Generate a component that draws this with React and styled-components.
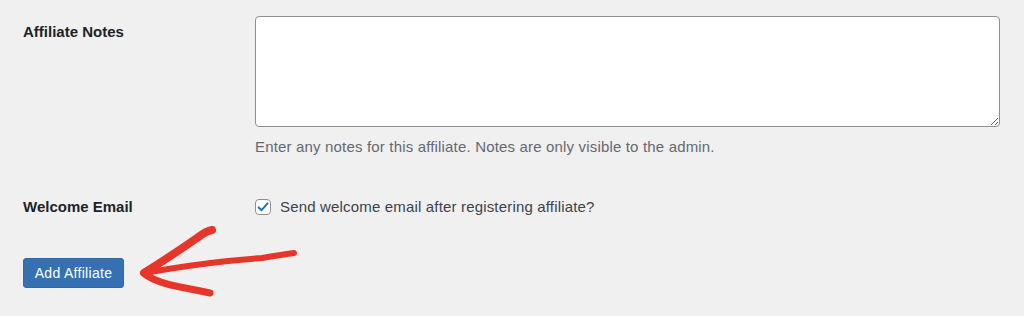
import styled, { createGlobalStyle } from "styled-components";

const GlobalStyle = createGlobalStyle`
  body {
    margin: 0;
    background: #f0f0f1;
    font-family: "Liberation Sans", Arial, sans-serif;
    color: #1d2327;
  }
`;

const Page = styled.div`
  position: relative;
  width: 1024px;
  height: 316px;
  padding: 16px 24px 0 23px;
  box-sizing: border-box;
`;

const Row = styled.div`
  display: grid;
  grid-template-columns: 232px 1fr;
  align-items: ${(p) => (p.$center ? "center" : "start")};
  margin-bottom: ${(p) => p.$gap || 0}px;
`;

const Label = styled.div`
  font-size: 15px;
  font-weight: 700;
  line-height: 20px;
  padding-top: ${(p) => p.$top || 0}px;
`;

const Field = styled.div`
  display: flex;
  flex-direction: column;
`;

const Notes = styled.textarea`
  width: 745px;
  height: 111px;
  box-sizing: border-box;
  border: 1px solid #8c8f94;
  border-radius: 4px;
  background: #fff;
  resize: vertical;
  outline: none;
  font: inherit;
`;

const Description = styled.p`
  margin: 9px 0 0;
  font-size: 15px;
  letter-spacing: 0.17px;
  line-height: 21px;
  color: #646970;
`;

const CheckLabel = styled.label`
  display: flex;
  align-items: center;
  gap: 9px;
  font-size: 15px;
  letter-spacing: 0.17px;
  line-height: 20px;
  color: #3c434a;
`;

const Box = styled.span`
  width: 16px;
  height: 16px;
  box-sizing: border-box;
  border: 1px solid #8c8f94;
  border-radius: 4px;
  background: #fff;
  display: flex;
  align-items: center;
  justify-content: center;
`;

const Button = styled.button`
  width: 101px;
  height: 30px;
  border: 1px solid #2f69aa;
  border-radius: 3px;
  background: #3571b2;
  color: #fff;
  font-family: inherit;
  font-size: 14px;
  letter-spacing: 0.3px;
  padding: 0;
  cursor: pointer;
`;

const Arrow = styled.svg`
  position: absolute;
  left: 130px;
  top: 215px;
  pointer-events: none;
`;

const App = () => (
  <>
    <GlobalStyle />
    <Page>
      <Row $gap={40}>
        <Label $top={6}>Affiliate Notes</Label>
        <Field>
          <Notes />
          <Description>
            Enter any notes for this affiliate. Notes are only visible to the admin.
          </Description>
        </Field>
      </Row>
      <Row $center $gap={41}>
        <Label>Welcome Email</Label>
        <CheckLabel>
          <Box>
            <svg width="14" height="14" viewBox="0 0 14 14">
              <path
                d="M2.6 7.4 L5.6 10.2 L11.6 3.4"
                fill="none"
                stroke="#2271b1"
                strokeWidth="2"
                strokeLinecap="round"
                strokeLinejoin="round"
              />
            </svg>
          </Box>
          Send welcome email after registering affiliate?
        </CheckLabel>
      </Row>
      <Button>Add Affiliate</Button>
      <Arrow width="180" height="90" viewBox="0 0 180 90">
        <g fill="none" stroke="#e8352a" strokeLinecap="round" strokeLinejoin="round">
          <path d="M82 15 Q76 16 67 23 Q38 43 14 58" strokeWidth="8" />
          <path d="M14 58 Q60 50 98 46 Q115 44 132 43 Q150 40 164 38" strokeWidth="6" />
          <path d="M16 60 Q28 68 50 72 Q66 75 80 78" strokeWidth="7" />
        </g>
      </Arrow>
    </Page>
  </>
);

export default App;
